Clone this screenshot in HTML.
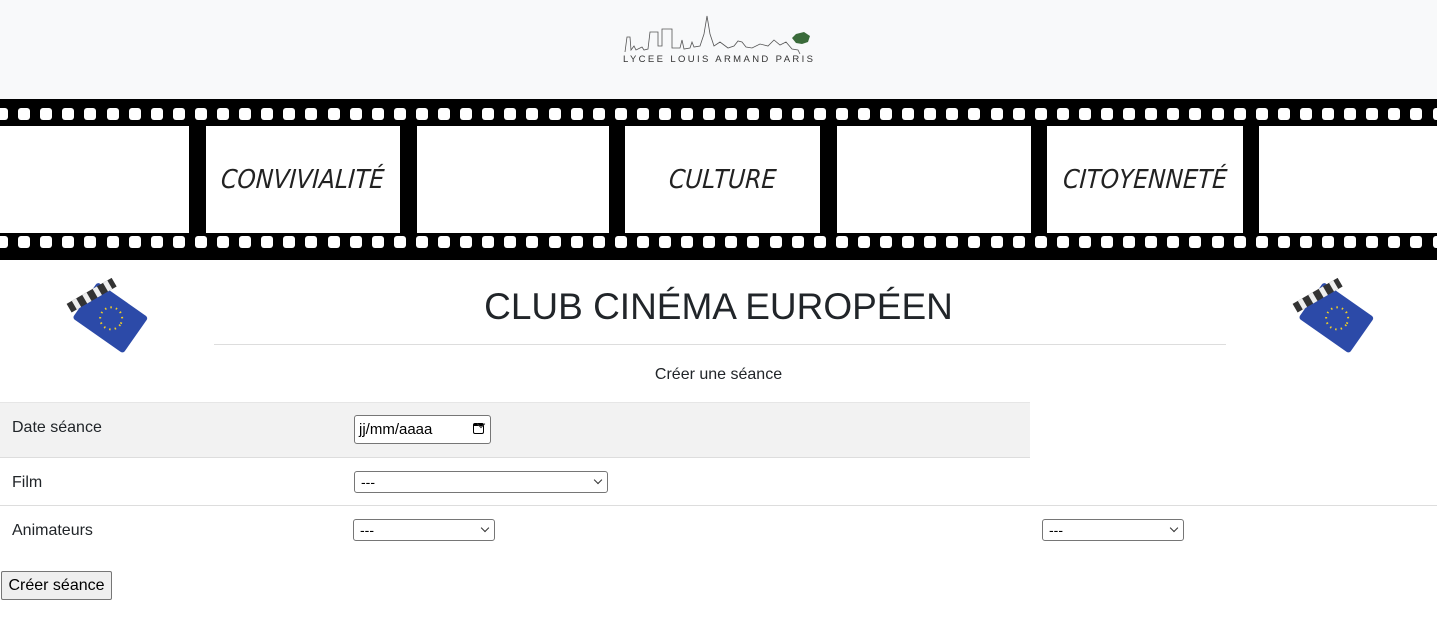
<!DOCTYPE html>
<html><head><meta charset="utf-8"><style>
body{margin:0;width:1437px;height:620px;overflow:hidden;font-family:"Liberation Sans",Arial,sans-serif;color:#212529;background:#fff;position:relative}
.hdr{position:absolute;left:0;top:0;width:1437px;height:99px;background:#f8f9fa}
.film{position:absolute;left:0;top:99px;width:1437px;height:161px;background:#000}
.frame{position:absolute;top:27px;height:107px;background:#fff;display:flex;align-items:center;justify-content:center}
.frame span{font-family:"DejaVu Sans",sans-serif;font-style:italic;font-size:26px;color:#222;font-weight:200;display:inline-block;transform:scaleX(0.9) skewX(-4deg);white-space:nowrap}
.h{position:absolute;width:12px;height:12px;background:#fff;border-radius:3px}
h1{position:absolute;top:285px;left:0;width:1437px;text-align:center;margin:0;font-weight:400;font-size:37px;line-height:44px}
.hr{position:absolute;top:344px;left:214px;width:1012px;height:1px;background:#ddd}
.t{position:absolute;font-size:16px}
.sel{position:absolute;height:22px;border:1px solid #767676;border-radius:3px;background:#fff;font-size:14px;box-sizing:border-box;padding:2px 6px;color:#000}
.sel:after{content:"";position:absolute;right:6px;top:5px;width:5px;height:5px;border-right:1.5px solid #333;border-bottom:1.5px solid #333;transform:rotate(45deg)}
</style></head><body>
<div class="hdr">
<svg style="position:absolute;left:620px;top:12px" width="200" height="55" viewBox="0 0 200 55">
<path d="M5 40 L7 25 L10 25 L11 38 L14 34 L16 38 L20 36 L22 35 L24 38 L28 37 L30 20 L38 20 L38 34 L42 34 L42 17 L52 17 L52 36 L60 36 L62 28 L64 37 L70 36 L72 30 L74 35 L80 34 L84 22 L87 4 L90 22 L94 34 L100 30 L104 33 L108 36 L114 34 L118 29 L122 30 L126 35 L132 36 L140 32 L148 34 L154 28 L160 33 L166 30 L172 37 L178 38 L180 42" fill="none" stroke="#555" stroke-width="0.8"/>
<path d="M172 26 L176 22 L184 20 L190 24 L188 30 L182 32 L176 31Z" fill="#3a6b3a"/>
<text x="3" y="50" font-size="9.5" font-family="Liberation Sans" fill="#333" textLength="190" lengthAdjust="spacing">LYCEE LOUIS ARMAND PARIS</text>
</svg></div>
<div class="film" id="film">
<div class="frame" style="left:0;width:189px"></div>
<div class="frame" style="left:206px;width:194px"><span>CONVIVIALITÉ</span></div>
<div class="frame" style="left:417px;width:192px"></div>
<div class="frame" style="left:625px;width:195px"><span>CULTURE</span></div>
<div class="frame" style="left:837px;width:194px"></div>
<div class="frame" style="left:1047px;width:196px"><span>CITOYENNETÉ</span></div>
<div class="frame" style="left:1259px;width:178px"></div>
</div>
<script>
var f=document.getElementById('film');for(var x=-4;x<1437;x+=22.1){['9px','137px'].forEach(function(t){var d=document.createElement('div');d.className='h';d.style.left=x+'px';d.style.top=t;f.appendChild(d);});}
</script>
<svg style="position:absolute;left:64px;top:270px" width="92" height="92" viewBox="0 0 92 92">
<g transform="rotate(35 46 50)"><rect x="14" y="26" width="62" height="44" rx="3" fill="#2c4aa8"/><circle cx="46" cy="48" r="11" fill="none" stroke="#f2d024" stroke-width="2" stroke-dasharray="1.5 4"/></g>
<g transform="rotate(-30 20 40)"><rect x="8" y="26" width="52" height="10" fill="#333"/><g fill="#eee"><rect x="14" y="26" width="5" height="10"/><rect x="26" y="26" width="5" height="10"/><rect x="38" y="26" width="5" height="10"/><rect x="50" y="26" width="5" height="10"/></g></g></svg>
<svg style="position:absolute;left:1290px;top:270px" width="92" height="92" viewBox="0 0 92 92">
<g transform="rotate(35 46 50)"><rect x="14" y="26" width="62" height="44" rx="3" fill="#2c4aa8"/><circle cx="46" cy="48" r="11" fill="none" stroke="#f2d024" stroke-width="2" stroke-dasharray="1.5 4"/></g>
<g transform="rotate(-30 20 40)"><rect x="8" y="26" width="52" height="10" fill="#333"/><g fill="#eee"><rect x="14" y="26" width="5" height="10"/><rect x="26" y="26" width="5" height="10"/><rect x="38" y="26" width="5" height="10"/><rect x="50" y="26" width="5" height="10"/></g></g></svg>
<h1>CLUB CINÉMA EUROPÉEN</h1>
<div class="hr"></div>
<div class="t" style="top:366px;left:0;width:1437px;text-align:center">Créer une séance</div>
<div style="position:absolute;top:402px;left:0;width:1030px;height:55px;background:#f2f2f2;border-top:1px solid #e6e6e6"></div>
<div style="position:absolute;top:457px;left:0;width:1030px;height:1px;background:#ddd"></div>
<div style="position:absolute;top:505px;left:0;width:1437px;height:1px;background:#ddd"></div>
<div class="t" style="top:419px;left:12px">Date séance</div>
<div class="t" style="top:474px;left:12px">Film</div>
<div class="t" style="top:522px;left:12px">Animateurs</div>
<div class="sel" style="top:415px;left:354px;width:137px;height:29px;padding:5px 4px;font-size:15px">jj/mm/aaaa<span style="position:absolute;right:6px;top:7px;width:11px;height:11px;border:1.5px solid #000;border-top-width:3px;border-radius:2px;box-sizing:border-box"></span></div>
<div class="sel" style="top:471px;left:354px;width:254px">---</div>
<div class="sel" style="top:519px;left:353px;width:142px">---</div>
<div class="sel" style="top:519px;left:1042px;width:142px">---</div>
<div style="position:absolute;top:571px;left:1px;width:111px;height:29px;box-sizing:border-box;border:1px solid #767676;border-radius:2px;background:#efefef;font-size:16px;text-align:center;line-height:27px;color:#000">Créer séance</div>
</body></html>
